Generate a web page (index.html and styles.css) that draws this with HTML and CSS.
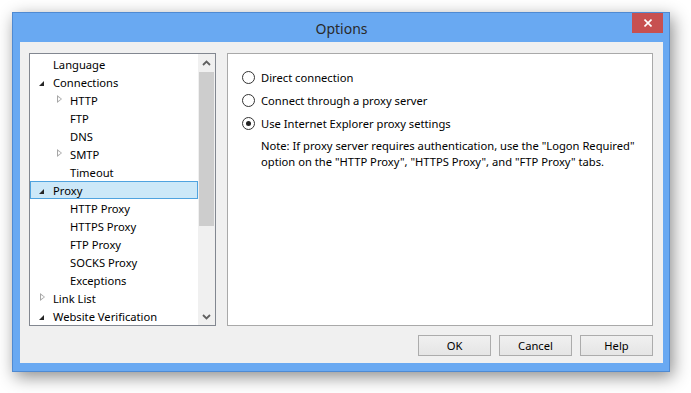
FILE: index.html
```html
<!DOCTYPE html>
<html lang="en">
<head>
    <meta charset="UTF-8">
    <title>Options</title>
    <link rel="stylesheet" href="styles.css">
</head>
<body>

    <div class="window">
        <div class="titlebar">
            <span></span>
            <span class="title">Options</span>
            <div class="close">
                <svg width="8" height="8" viewBox="0 0 8 8">
                    <path d="M0.5 0.5 L7.5 7.5 M7.5 0.5 L0.5 7.5" stroke="#fff" stroke-width="1.6" fill="none"/>
                </svg>
            </div>
        </div>

        <div class="client">
            <div class="panels">
                <!-- Left: settings tree -->
                <div class="tree">
                    <ul class="tree-list">
                        <li class="row l1"><span class="exp"></span>Language</li>
                        <li class="row l1"><span class="exp open"></span>Connections</li>
                        <li class="row l2"><span class="exp closed"></span>HTTP</li>
                        <li class="row l2"><span class="exp"></span>FTP</li>
                        <li class="row l2"><span class="exp"></span>DNS</li>
                        <li class="row l2"><span class="exp closed"></span>SMTP</li>
                        <li class="row l2"><span class="exp"></span>Timeout</li>
                        <li class="row l1 selected"><span class="exp open"></span>Proxy</li>
                        <li class="row l2"><span class="exp"></span>HTTP Proxy</li>
                        <li class="row l2"><span class="exp"></span>HTTPS Proxy</li>
                        <li class="row l2"><span class="exp"></span>FTP Proxy</li>
                        <li class="row l2"><span class="exp"></span>SOCKS Proxy</li>
                        <li class="row l2"><span class="exp"></span>Exceptions</li>
                        <li class="row l1"><span class="exp closed"></span>Link List</li>
                        <li class="row l1"><span class="exp open"></span>Website Verification</li>
                    </ul>
                    <div class="scrollbar">
                        <div class="arrow">
                            <svg width="9" height="6" viewBox="0 0 9 6">
                                <polyline points="1,5 4.5,1.5 8,5" stroke="#606060" stroke-width="1.8" fill="none"/>
                            </svg>
                        </div>
                        <div class="track"><div class="thumb"></div></div>
                        <div class="arrow">
                            <svg width="9" height="6" viewBox="0 0 9 6">
                                <polyline points="1,1 4.5,4.5 8,1" stroke="#606060" stroke-width="1.8" fill="none"/>
                            </svg>
                        </div>
                    </div>
                </div>

                <!-- Right: proxy page -->
                <div class="page">
                    <label class="radio"><span class="dot"></span>Direct connection</label>
                    <label class="radio"><span class="dot"></span>Connect through a proxy server</label>
                    <label class="radio"><span class="dot checked"></span>Use Internet Explorer proxy settings</label>
                    <p class="note">Note: If proxy server requires authentication, use the "Logon Required"<br>option on the "HTTP Proxy", "HTTPS Proxy", and "FTP Proxy" tabs.</p>
                </div>
            </div>

            <div class="buttons">
                <button class="btn">OK</button>
                <button class="btn">Cancel</button>
                <button class="btn">Help</button>
            </div>
        </div>
    </div>

</body>
</html>
```

FILE: styles.css
```css
* {
    margin: 0;
    padding: 0;
    box-sizing: border-box;
}

html, body {
    height: 100%;
}

body {
    background: #fff;
    font-family: 'Noto Sans', 'DejaVu Sans', sans-serif;
    font-size: 11.2px;
    color: #000;
    padding: 12px 0 0 12px;
}

.window {
    width: 658px;
    height: 360px;
    background: #69a9f2;
    border: 1px solid #4f8ad2;
    padding: 0 6px 8px 7px;
    display: flex;
    flex-direction: column;
    box-shadow: 3px 5px 16px rgba(0, 0, 0, 0.45);
}

.titlebar {
    height: 29px;
    flex: none;
    display: grid;
    grid-template-columns: 1fr auto 1fr;
    align-items: center;
}

.title {
    font-size: 14px;
    color: #2a2a2a;
    padding-top: 1px;
}

.close {
    justify-self: end;
    align-self: start;
    width: 31px;
    height: 20px;
    background: #c75050;
    display: flex;
    justify-content: center;
    align-items: center;
}

.client {
    height: 321px;
    flex: none;
    background: #f0f0f0;
    padding: 11px 10px 7px 9px;
    display: flex;
    flex-direction: column;
}

.panels {
    height: 273px;
    flex: none;
    display: flex;
    gap: 11px;
}

/* Tree */
.tree {
    width: 187px;
    border: 1px solid #828790;
    background: #fff;
    display: flex;
}

.tree-list {
    flex: 1;
    list-style: none;
    padding-top: 1px;
    overflow: hidden;
}

.row {
    height: 18px;
    display: flex;
    align-items: center;
    white-space: nowrap;
    border: 1px solid transparent;
}

.row.l1 { padding-left: 5px; }
.row.l2 { padding-left: 22px; }

.row.selected {
    background: #cce8f8;
    border-color: #4fa3df;
}

.exp {
    width: 17px;
    height: 16px;
    flex: none;
    position: relative;
}

.exp.open::after {
    content: '';
    position: absolute;
    left: 3px;
    top: 7px;
    border-style: solid;
    border-width: 0 0 5px 5px;
    border-color: transparent transparent #262626 transparent;
}

.exp.closed::before {
    content: '';
    position: absolute;
    left: 4px;
    top: 3px;
    border-style: solid;
    border-width: 4.5px 0 4.5px 5px;
    border-color: transparent transparent transparent #a6a6a6;
}

.exp.closed::after {
    content: '';
    position: absolute;
    left: 5px;
    top: 5px;
    border-style: solid;
    border-width: 2.5px 0 2.5px 3px;
    border-color: transparent transparent transparent #fff;
}

.scrollbar {
    width: 17px;
    background: #f0f0f0;
    display: flex;
    flex-direction: column;
}

.arrow {
    height: 17px;
    display: flex;
    justify-content: center;
    align-items: center;
}

.track {
    flex: 1;
    padding: 1px 1px 0 1px;
}

.thumb {
    height: 154px;
    background: #cdcdcd;
}

/* Proxy page */
.page {
    flex: 1;
    border: 1px solid #a9a9a9;
    background: #fff;
    padding: 12px 0 0 14px;
}

.radio {
    height: 23px;
    display: flex;
    align-items: center;
    gap: 6px;
}

.dot {
    width: 13px;
    height: 13px;
    border: 1px solid #333;
    border-radius: 50%;
    background: #fff;
    display: flex;
    justify-content: center;
    align-items: center;
}

.dot.checked::after {
    content: '';
    width: 5px;
    height: 5px;
    border-radius: 50%;
    background: #222;
}

.note {
    margin-top: 3px;
    padding-left: 19px;
    line-height: 16px;
    white-space: nowrap;
}

/* Buttons */
.buttons {
    margin-top: 9px;
    display: flex;
    justify-content: flex-end;
    gap: 8px;
}

.btn {
    width: 73px;
    height: 21px;
    border: 1px solid #acacac;
    background: linear-gradient(#f0f0f0, #e5e5e5);
    font-family: inherit;
    font-size: 11.2px;
    color: #000;
}
```
